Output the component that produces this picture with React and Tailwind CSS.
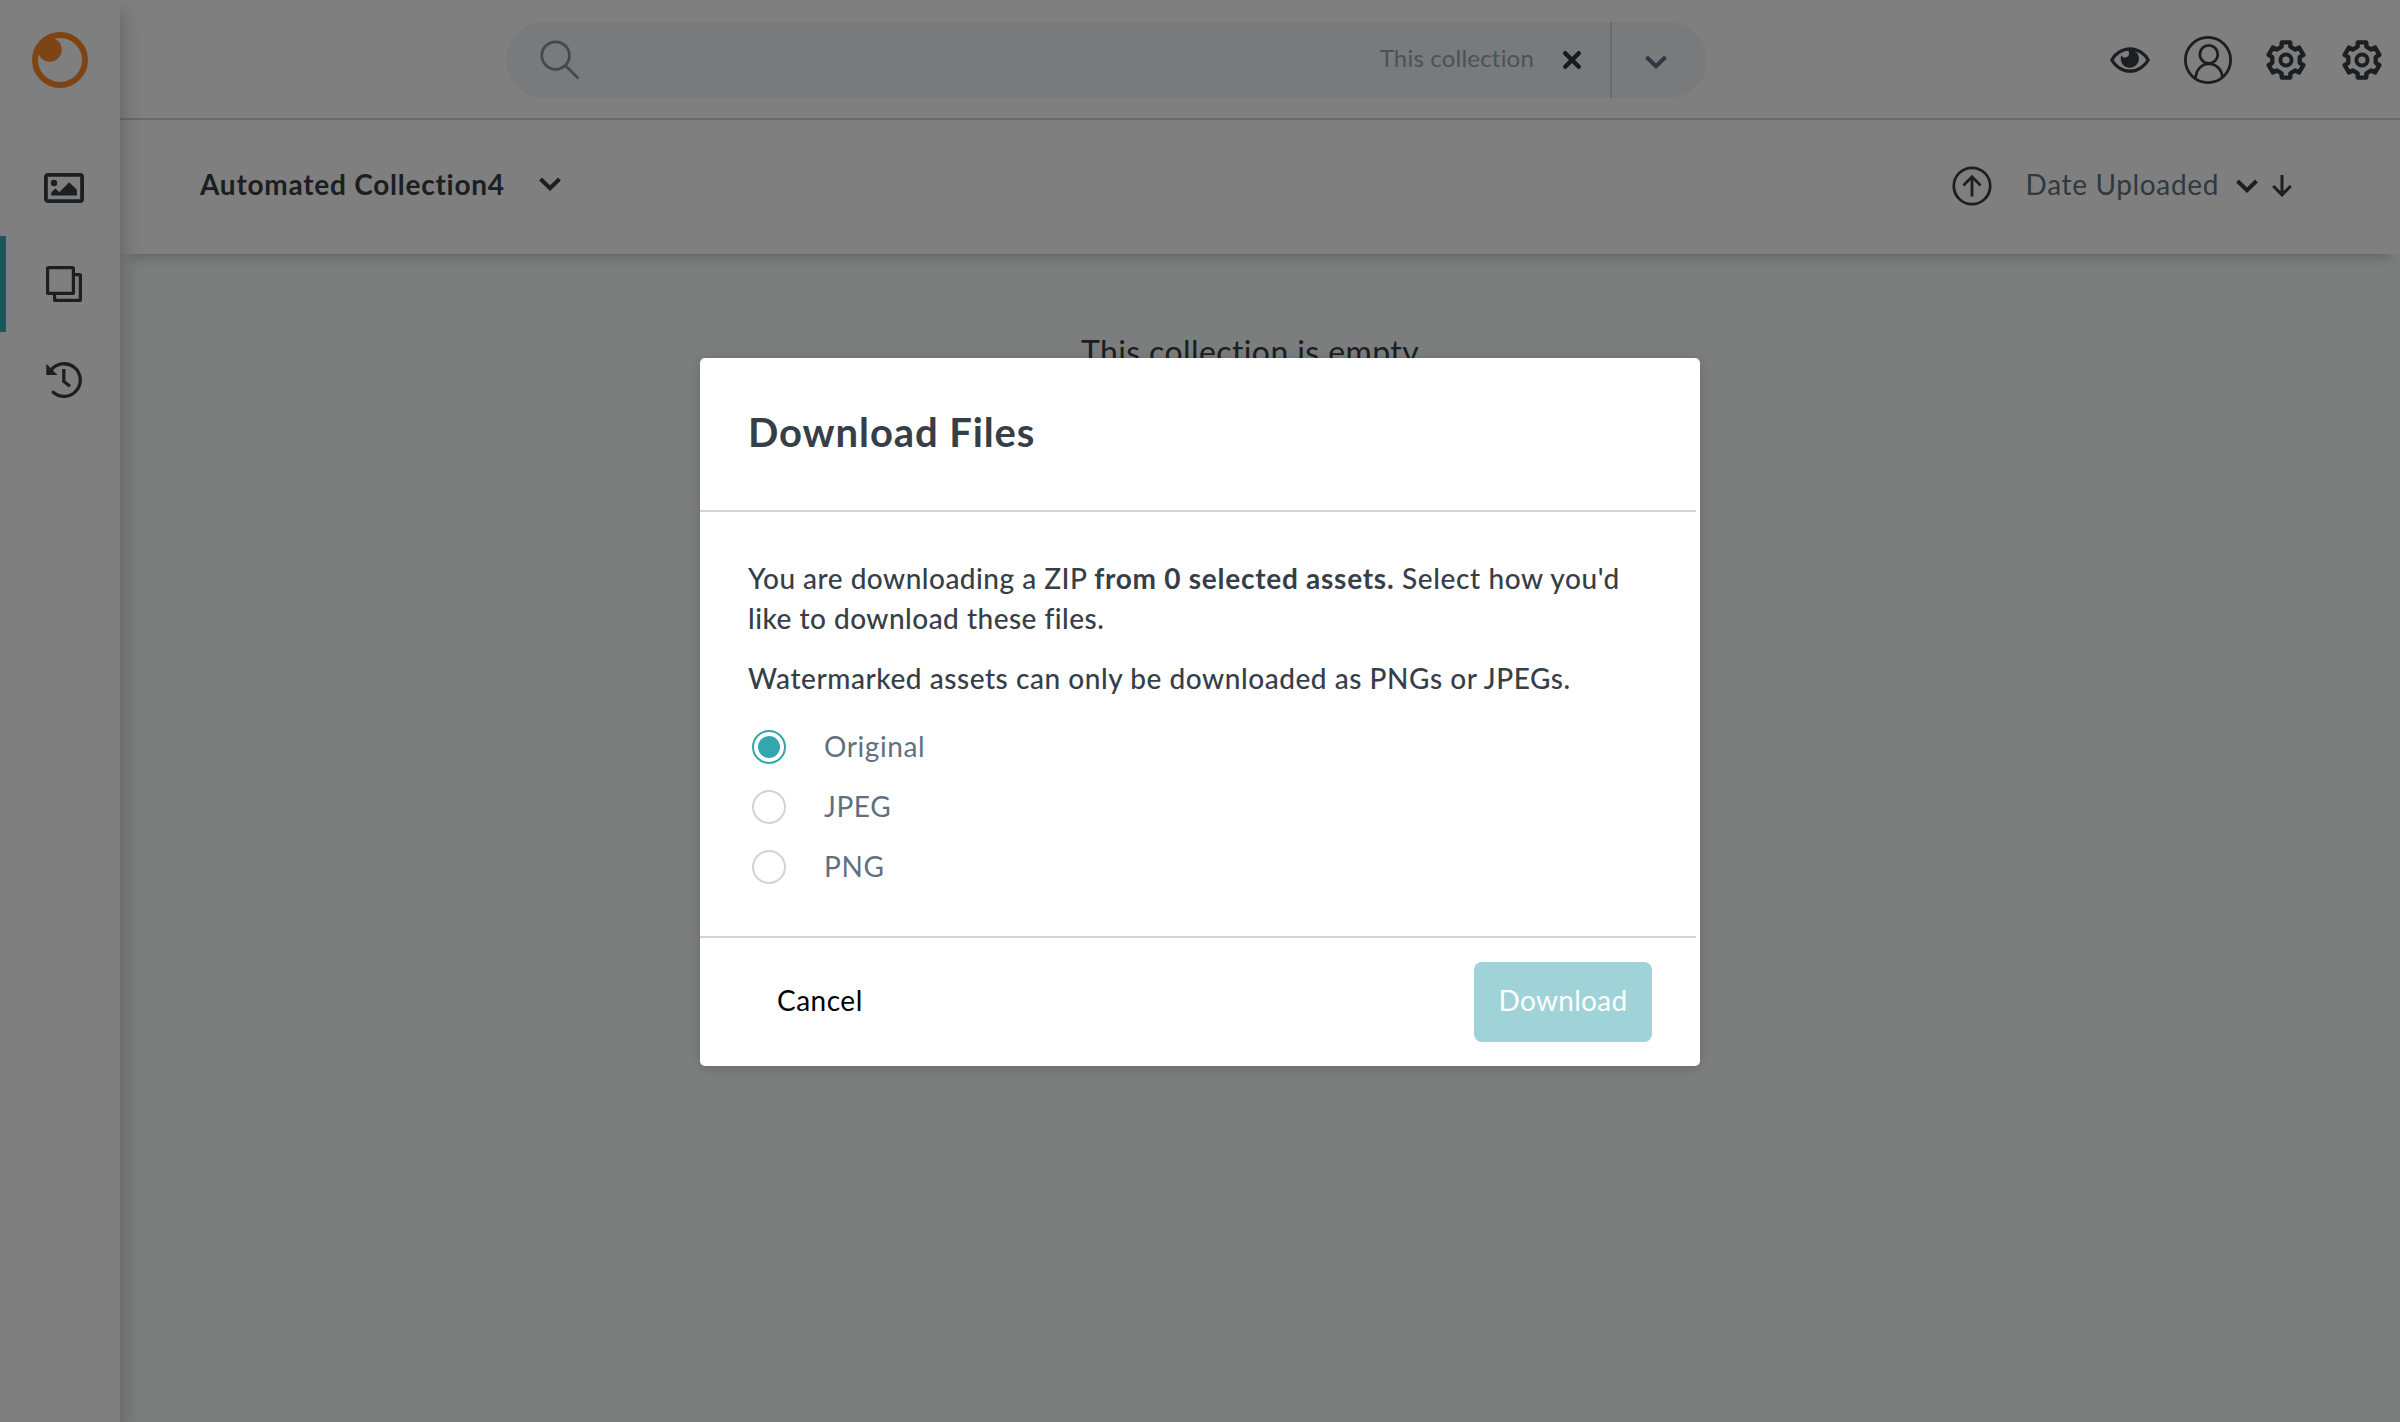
const TOOTH = [
  [-4.4, -13.3],
  [-4.2, -17.6],
  [4.2, -17.6],
  [4.4, -13.3],
];

const GEAR_POINTS = [0, 60, 120, 180, 240, 300]
  .flatMap((deg) => {
    const a = (deg * Math.PI) / 180;
    return TOOTH.map(([x, y]) => [
      x * Math.cos(a) - y * Math.sin(a),
      x * Math.sin(a) + y * Math.cos(a),
    ]);
  })
  .map(([x, y]) => `${x.toFixed(2)},${y.toFixed(2)}`)
  .join(" ");

function Gear() {
  return (
    <svg className="size-10 shrink-0" viewBox="-20 -20 40 40" fill="none" stroke="currentColor">
      <polygon points={GEAR_POINTS} strokeWidth="4.4" strokeLinejoin="round" />
      <circle r="5.6" strokeWidth="4" />
    </svg>
  );
}

function Chevron({ className }) {
  return (
    <svg className={className} viewBox="0 0 22 14" fill="none" stroke="currentColor" strokeWidth="4">
      <path d="M1.5 2 11 11.2 20.5 2" />
    </svg>
  );
}

function Logo() {
  return (
    <svg className="size-14 text-[#fa8828]" viewBox="0 0 56 56">
      <circle cx="28" cy="28" r="25" fill="none" stroke="currentColor" strokeWidth="6" />
      <circle cx="17.8" cy="17.8" r="12" fill="currentColor" />
    </svg>
  );
}

function Sidebar() {
  return (
    <aside className="relative z-20 flex w-[120px] shrink-0 flex-col bg-white shadow-[4px_10px_20px_rgba(0,0,0,0.2)]">
      <div className="flex h-[116px] items-center justify-center pt-1">
        <Logo />
      </div>
      <nav className="mt-6 flex flex-col">
        <a className="flex h-24 items-center pl-11">
          <svg className="h-[30px] w-10" viewBox="0 0 40 30">
            <rect x="1.9" y="1.9" width="36.2" height="26.2" rx="2" fill="none" stroke="currentColor" strokeWidth="3.8" />
            <circle cx="10" cy="10" r="3.2" fill="currentColor" />
            <path d="M7.3 22.6v-3.4l4.2-3.8 3.8 3.8 9.8-10 7.8 7.6v5.8z" fill="currentColor" />
          </svg>
        </a>
        <a className="flex h-24 items-center border-l-[6px] border-[#3aaab4] pl-10">
          <svg className="size-9" viewBox="0 0 36 36" fill="none" stroke="currentColor" strokeWidth="3.2" strokeLinejoin="round">
            <rect x="1.6" y="1.6" width="25.8" height="25.8" rx="1" />
            <path d="M29 8.6h4.4a1 1 0 0 1 1 1v23.8a1 1 0 0 1-1 1H9.6a1 1 0 0 1-1-1V29" />
          </svg>
        </a>
        <a className="flex h-24 items-center pl-[46px]">
          <svg className="size-9" viewBox="0 0 36 36" fill="none" stroke="currentColor" strokeWidth="3.3">
            <path d="M5 8.2A16.3 16.3 0 1 1 7.2 30.3" strokeLinecap="round" />
            <path d="M17.8 7v12.5l6.2 4.7" />
            <path d="M.3 1.7V13h11.2z" fill="currentColor" stroke="none" />
          </svg>
        </a>
      </nav>
    </aside>
  );
}

function SearchBar() {
  return (
    <div className="flex h-[76px] w-[1201px] items-center overflow-hidden rounded-full bg-[#f2f4f8] text-[#8e9092]">
      <svg className="ml-[34px] size-10" viewBox="0 0 40 40" fill="none" stroke="currentColor" strokeWidth="2.8">
        <circle cx="15.6" cy="15.6" r="13.8" />
        <path d="m25.4 25.4 13 13" />
      </svg>
      <span className="ml-auto pb-[5px] text-2xl tracking-[0.2px] text-[#97a4b0]">This collection</span>
      <svg className="ml-7 size-5 text-[#2e3236]" viewBox="0 0 20 20" stroke="currentColor" strokeWidth="4.4" strokeLinecap="round">
        <path d="m3.2 3.2 13.6 13.6M16.8 3.2 3.2 16.8" />
      </svg>
      <div className="ml-7 flex h-full w-[97px] items-center border-l-2 border-[#d5d7d8] pt-1 pl-[33px]">
        <Chevron className="h-3.5 w-[22px] text-[#5f7080]" />
      </div>
    </div>
  );
}

function Header() {
  return (
    <header className="flex h-[120px] items-center border-b-2 border-[#d4d5d5] bg-white pt-0.5 pr-[18px] pl-[386px]">
      <SearchBar />
      <div className="ml-auto flex items-center">
        <svg className="h-[26px] w-10" viewBox="0 0 40 26">
          <path d="M1.8 13C5 7 12 1.8 20 1.8S35 7 38.2 13C35 19 28 24.2 20 24.2S5 19 1.8 13z" fill="none" stroke="currentColor" strokeWidth="3.2" strokeLinejoin="round" />
          <path d="M18.5 2.4A9.2 9.2 0 1 1 11.2 8.2 4 4 0 1 0 18.5 4.4z" fill="currentColor" />
        </svg>
        <svg className="ml-[34px] size-12" viewBox="-24 -24 48 48" fill="none" stroke="currentColor" strokeWidth="2.8">
          <circle r="22.6" />
          <circle cx="0.8" cy="-5.6" r="9" />
          <path d="M-12.4 18.6C-12 9-6 3.8 .8 3.8S14 9 14.4 17.6" />
        </svg>
        <div className="ml-[34px] flex gap-9">
          <Gear />
          <Gear />
        </div>
      </div>
    </header>
  );
}

function Toolbar() {
  return (
    <div className="flex h-[134px] items-center bg-white pr-[108px] pb-[7px] pl-20 shadow-[0_12px_12px_-10px_rgba(0,0,0,0.25)]">
      <h1 className="text-[28px] font-bold tracking-[0.75px]">Automated Collection4</h1>
      <Chevron className="ml-[34px] h-3.5 w-[22px]" />
      <svg className="mt-1 ml-auto size-10" viewBox="0 0 40 40" fill="none" stroke="currentColor" strokeWidth="2.8">
        <circle cx="20" cy="20" r="18.2" />
        <path d="M20 30.5V11.5M11.4 19.4 20 10.8l8.6 8.6" />
      </svg>
      <span className="ml-[34px] text-[28px] tracking-[0.65px] text-[#607080]">Date Uploaded</span>
      <Chevron className="mt-1 ml-[17px] h-3.5 w-[22px]" />
      <svg className="mt-1 ml-3.5 h-[22px] w-5" viewBox="0 0 20 22" fill="none" stroke="currentColor" strokeWidth="3">
        <path d="M10 0v19.5M1.2 11 10 19.8l8.8-8.8" />
      </svg>
    </div>
  );
}

function RadioOption({ label, checked }) {
  return (
    <label className="flex h-[60px] items-center">
      <span
        className={
          checked
            ? "ml-1 flex size-[34px] items-center justify-center rounded-full border-2 border-[#33a6b0]"
            : "ml-1 flex size-[34px] items-center justify-center rounded-full border-2 border-[#ced4d9]"
        }
      >
        {checked && <span className="size-[22px] rounded-full bg-[#33a6b0]" />}
      </span>
      <span className="ml-[38px] pb-0.5 text-[28px] tracking-[0.6px] text-[#607080]">{label}</span>
    </label>
  );
}

function DownloadDialog() {
  return (
    <section className="flex h-[708px] w-[1000px] flex-col rounded-[5px] bg-white text-[28px] leading-10 text-[#363e48] shadow-[0_2px_12px_rgba(0,0,0,0.16)]">
      <h2 className="mr-1 flex h-[154px] items-center border-b-2 border-[#ced4d9] pb-[5px] pl-12 text-[40px] font-bold tracking-[0.9px]">
        Download Files
      </h2>
      <div className="mr-1 flex h-[426px] flex-col border-b-2 border-[#ced4d9] px-12 pt-[46px]">
        <p className="font-medium tracking-[0.48px]">
          You are downloading a ZIP <b className="font-bold tracking-[0.74px]">from 0 selected assets.</b>
          <span className="tracking-[0.62px]"> Select how you'd</span>
          <br />
          like to download these files.
        </p>
        <p className="mt-5 font-medium tracking-[0.55px] whitespace-nowrap">
          Watermarked assets can only be downloaded as PNGs or JPEGs.
        </p>
        <div className="mt-[19px] flex flex-col">
          <RadioOption label="Original" checked />
          <RadioOption label="JPEG" />
          <RadioOption label="PNG" />
        </div>
      </div>
      <div className="flex flex-1 items-center justify-between pr-12 pl-[77px]">
        <button className="pb-1 tracking-[0.5px] text-black">Cancel</button>
        <button className="h-20 w-[178px] rounded-lg bg-[#a0d3d8] pb-1 tracking-[0.3px] text-white">Download</button>
      </div>
    </section>
  );
}

export default function App() {
  return (
    <div className="relative flex h-[1422px] w-[2400px] overflow-hidden bg-[#f8fbfa] font-['Lato',sans-serif] text-[#363e44]">
      <Sidebar />
      <main className="flex flex-1 flex-col">
        <Header />
        <Toolbar />
        <p className="mt-[74px] pr-5 text-center text-[32px] leading-[48px] tracking-[0.4px]">This collection is empty</p>
      </main>
      <div className="absolute inset-0 z-30 flex items-start justify-center bg-black/50 pt-[358px]">
        <DownloadDialog />
      </div>
    </div>
  );
}
